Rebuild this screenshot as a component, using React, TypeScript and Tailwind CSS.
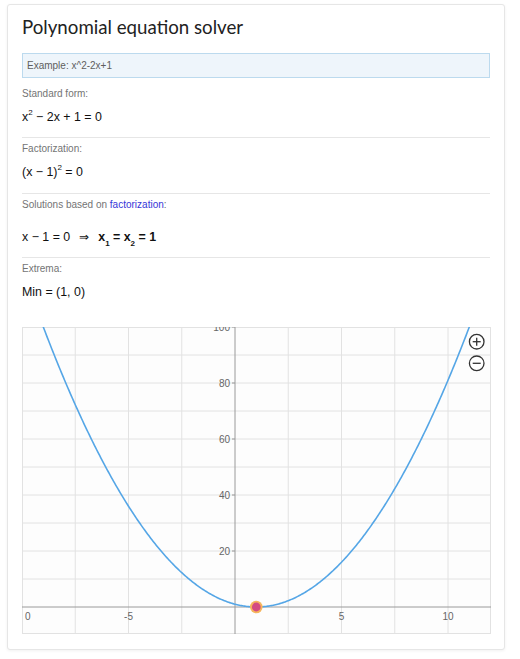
import React from "react";

const W = 469;
const H = 307;
const X0 = 213; // pixel of x = 0
const Y0 = 280; // pixel of y = 0
const SX = 21.3;
const SY = 2.8;

const px = (x: number) => X0 + x * SX;
const py = (y: number) => Y0 - y * SY;

function Graph() {
	const points: string[] = [];
	for (let x = -10.2; x <= 12.2; x += 0.05) {
		const y = (x - 1) * (x - 1);
		points.push(`${px(x).toFixed(2)},${py(y).toFixed(2)}`);
	}
	const vLines = [0, 1, 2, 3, 5, 6, 7, 8].map((k) => px(-10 + k * 2.5));
	const hLines = [100, 90, 80, 70, 60, 50, 40, 30, 20, 10];
	const yLabels = [100, 80, 60, 40, 20];

	return (
		<svg width={W} height={H} viewBox={`0 0 ${W} ${H}`} className="block">
			<defs>
				<clipPath id="plot">
					<rect x="0" y="0" width={W} height={H} />
				</clipPath>
			</defs>
			<rect x="0" y="0" width={W} height={H} fill="#fdfdfd" />
			{vLines.map((x) => (
				<line key={x} x1={x} x2={x} y1={0} y2={H} stroke="#e2e2e2" strokeWidth="1" />
			))}
			{hLines.map((y) => (
				<line key={y} x1={0} x2={W} y1={py(y)} y2={py(y)} stroke="#e2e2e2" strokeWidth="1" />
			))}
			<rect x="0.5" y="0.5" width={W - 1} height={H - 1} fill="none" stroke="#e2e2e2" strokeWidth="1" />
			<line x1={X0} x2={X0} y1={0} y2={H} stroke="#9a9a9a" strokeWidth="1" />
			<line x1={0} x2={W} y1={Y0} y2={Y0} stroke="#9a9a9a" strokeWidth="1" />
			{yLabels.map((v) => (
				<g key={v}>
					<line x1={X0 - 3} x2={X0} y1={py(v)} y2={py(v)} stroke="#9a9a9a" strokeWidth="1" />
					<text
						x={X0 - 5}
						y={py(v) + 3.5}
						textAnchor="end"
						fontSize="10"
						fill="#666"
						fontFamily="'Liberation Sans', Arial, sans-serif"
					>
						{v}
					</text>
				</g>
			))}
			<text x={3} y={Y0 + 13} fontSize="10" fill="#666" fontFamily="'Liberation Sans', Arial, sans-serif">
				0
			</text>
			{[-5, 5, 10].map((v) => (
				<text
					key={v}
					x={px(v)}
					y={Y0 + 13}
					textAnchor="middle"
					fontSize="10"
					fill="#666"
					fontFamily="'Liberation Sans', Arial, sans-serif"
				>
					{v}
				</text>
			))}
			<polyline
				points={points.join(" ")}
				fill="none"
				stroke="#55a6e6"
				strokeWidth="1.6"
				clipPath="url(#plot)"
			/>
			<circle cx={px(1)} cy={Y0} r="6.3" fill="#f6b55c" />
			<circle cx={px(1)} cy={Y0} r="4.4" fill="#d34b82" />
			{/* zoom controls */}
			<g fill="none" stroke="#333" strokeWidth="1.3">
				<circle cx="454.7" cy="14.7" r="7.3" fill="#fff" />
				<line x1="450.7" x2="458.7" y1="14.7" y2="14.7" />
				<line x1="454.7" x2="454.7" y1="10.7" y2="18.7" />
				<circle cx="454.7" cy="36.3" r="7.3" fill="#fff" />
				<line x1="450.7" x2="458.7" y1="36.3" y2="36.3" />
			</g>
		</svg>
	);
}

function Label({ children, className = "" }: { children: React.ReactNode; className?: string }) {
	return <div className={`text-[10px] leading-[14px] text-[#747474] ${className}`}>{children}</div>;
}

function Sup({ children }: { children: React.ReactNode }) {
	return <sup className="text-[8px] relative top-[-1px] align-super leading-none">{children}</sup>;
}

function Sub({ children }: { children: React.ReactNode }) {
	return <sub className="text-[8px] align-sub leading-none">{children}</sub>;
}

export default function App() {
	return (
		<div className="min-h-[659px] bg-white pt-[4px] pl-[7px] font-['Liberation_Sans',Arial,sans-serif]">
			<div className="w-[498px] rounded-[3px] border border-[#e6e6e6] bg-white px-[14px] pt-[9px] pb-[15px] shadow-[0_1px_3px_rgba(0,0,0,0.06)]">
				<h1 className="font-['Lato',sans-serif] text-[18.7px] leading-[26px] text-[#222]">
					Polynomial equation solver
				</h1>
				<input
					type="text"
					placeholder="Example: x^2-2x+1"
					className="mt-[13px] block h-[25px] w-full border border-[#bcdaee] bg-[#eef5fb] px-[4px] text-[10px] text-[#333] outline-none placeholder:text-[#5e5e5e]"
				/>

				<div className="pb-[10px]">
					<Label className="mt-[9px]">Standard form:</Label>
					<div className="mt-[6px] text-[12.4px] leading-[20px] text-[#111]">
						x<Sup>2</Sup> − 2x + 1 = 0
					</div>
				</div>

				<div className="border-t border-[#e6e6e6] pt-[4px] pb-[11px]">
					<Label>Factorization:</Label>
					<div className="mt-[6px] text-[12.4px] leading-[20px] text-[#111]">
						(x − 1)<Sup>2</Sup> = 0
					</div>
				</div>

				<div className="border-t border-[#e6e6e6] pt-[4px] pb-[10px]">
					<Label>
						Solutions based on <span className="text-[#3636d8]">factorization</span>:
					</Label>
					<div className="mt-[15px] text-[12.4px] leading-[20px] text-[#111]">
						x − 1 = 0
						<span className="mx-[9px] inline-block">⇒</span>
						<span className="font-bold">
							x<Sub>1</Sub> = x<Sub>2</Sub> = 1
						</span>
					</div>
				</div>

				<div className="border-t border-[#e6e6e6] pt-[4px]">
					<Label>Extrema:</Label>
					<div className="mt-[6px] text-[12.4px] leading-[20px] text-[#111]">Min = (1, 0)</div>
				</div>

				<div className="mt-[25px]">
					<Graph />
				</div>
			</div>
		</div>
	);
}
